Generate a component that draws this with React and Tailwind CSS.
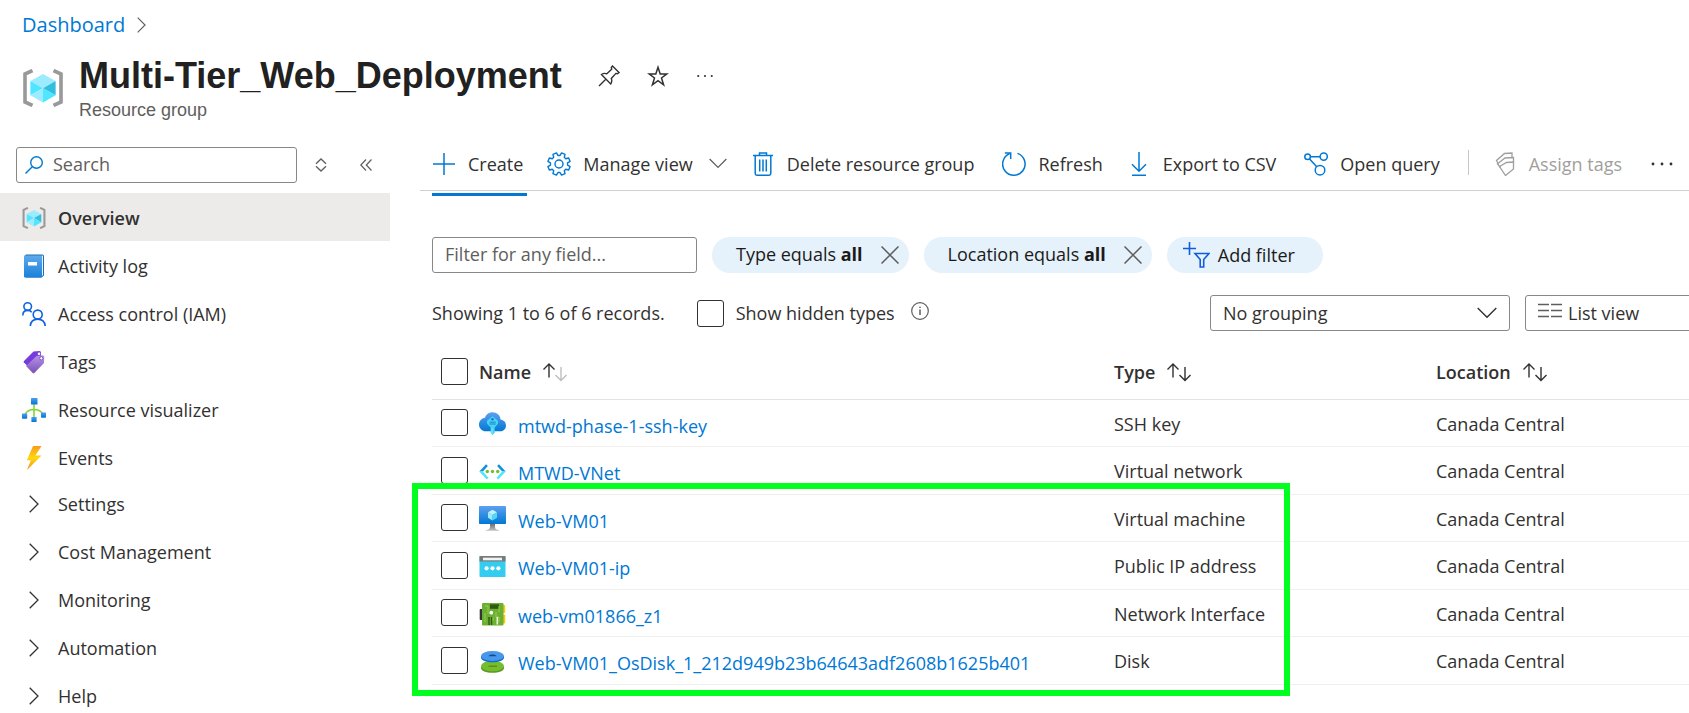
const svgBase = { fill: 'none', xmlns: 'http://www.w3.org/2000/svg', 'aria-hidden': true };

function ResourceGroupIcon({ className }) {
  return (
    <svg {...svgBase} viewBox="0 0 40 38" className={className}>
      <path d="M9.500 1.500 L2 5 V33 L9.500 36.500" stroke="#999" strokeWidth="3.600" />
      <path d="M30.500 1.500 L38 5 V33 L30.500 36.500" stroke="#999" strokeWidth="3.600" />
      <path d="M20 5 L32.600 12 L20 19.200 L7.400 12 Z" fill="#9cebff" />
      <path d="M7.400 12 L20 19.200 L7.400 26.300 Z" fill="#50e6ff" />
      <path d="M32.600 12 V26.300 L20 19.200 Z" fill="#32bedd" />
      <path d="M7.400 26.300 L20 19.200 V33.500 Z" fill="#9cebff" />
      <path d="M32.600 26.300 L20 19.200 V33.500 Z" fill="#50e6ff" />
    </svg>
  );
}

function Chevron({ className, direction = 'right' }) {
  return direction === 'right' ? (
    <svg {...svgBase} viewBox="0 0 10 18" className={className}>
      <path d="M0.700 0.700 L9 9 L0.700 17.300" stroke="currentColor" strokeWidth="1.300" />
    </svg>
  ) : (
    <svg {...svgBase} viewBox="0 0 20 12" className={className}>
      <path d="M0.700 1 L10 10.300 L19.300 1" stroke="currentColor" strokeWidth="1.400" />
    </svg>
  );
}

function ActivityLogIcon() {
  return (
    <svg {...svgBase} viewBox="0 0 24 24" className="size-6">
      <defs>
        <linearGradient id="book" x1="0" y1="0" x2="0" y2="1">
          <stop offset="0" stopColor="#5ea9ee" />
          <stop offset="1" stopColor="#1a80d8" />
        </linearGradient>
      </defs>
      <path d="M4 .5 H20.500 Q22 .5 22 2 V21.500 L19.500 23.500 H4 Q2.500 23 2.500 21.500 V2 Z" fill="#1f6fb0" />
      <path d="M19 2 L21 1.500 V21 L19 23 Z" fill="#e8f3fc" />
      <rect x="2" y="1.500" width="18" height="22" rx="1" fill="url(#book)" />
      <rect x="6" y="8" width="9" height="3.500" fill="#fff" />
    </svg>
  );
}

function AccessIcon() {
  return (
    <svg {...svgBase} viewBox="0 0 24 24" className="size-6" stroke="#0f62e0" strokeWidth="1.600">
      <circle cx="5.700" cy="4.600" r="3.800" />
      <path d="M.8 13.500 C.8 10 3 8.400 5.700 8.400 C7.500 8.400 8.800 9 9.700 10.200" />
      <circle cx="15.700" cy="12.600" r="4.500" />
      <path d="M8.300 24 C8.700 19.300 11.700 17.100 15.700 17.100 C19.700 17.100 22.700 19.300 23.200 24" />
    </svg>
  );
}

function TagsIcon() {
  return (
    <svg {...svgBase} viewBox="0 0 24 24" className="size-6">
      <defs>
        <linearGradient id="tag" x1="0" y1="0" x2="0" y2="1">
          <stop offset="0" stopColor="#b794e6" />
          <stop offset="1" stopColor="#7a51b8" />
        </linearGradient>
      </defs>
      <path d="M11.500 1.500 L17.500 1 Q19 1 19 2.500 V7 L5 15.500 L1.800 12.300 Q1.500 11.600 2 11 Z" fill="#773adc" />
      <circle cx="17" cy="3.800" r="1.300" fill="#fff" />
      <path d="M14.500 6 L20.500 5.300 Q22.200 5.300 22.200 7 L22 13 L12.400 23 Q11.500 23.600 10.700 23 L4 15.900 Z" fill="url(#tag)" />
      <circle cx="19.300" cy="8.300" r="1.600" fill="#fff" stroke="#6b3fb5" strokeWidth=".8" />
    </svg>
  );
}

function VisualizerIcon() {
  return (
    <svg {...svgBase} viewBox="0 0 24 24" className="size-6">
      <defs>
        <linearGradient id="node" x1="0" y1="0" x2="0" y2="1">
          <stop offset="0" stopColor="#4f9cf0" />
          <stop offset="1" stopColor="#0078d4" />
        </linearGradient>
      </defs>
      <path d="M12 6 V20 M3 16.500 C5 12.500 7.500 11.500 12 11.500 C16.500 11.500 19 12.500 21 16.500" stroke="#86d633" strokeWidth="1.600" />
      <rect x="9" y="0" width="6.500" height="6.500" rx=".6" fill="url(#node)" />
      <rect x="0" y="15.500" width="5.200" height="5.200" rx=".6" fill="url(#node)" />
      <rect x="9.400" y="19" width="5.200" height="5" rx=".6" fill="url(#node)" />
      <rect x="19" y="14.500" width="5" height="5.200" rx=".6" fill="url(#node)" />
    </svg>
  );
}

function EventsIcon() {
  return (
    <svg {...svgBase} viewBox="0 0 24 24" className="size-6">
      <defs>
        <linearGradient id="bolt" x1="0" y1="0" x2="0" y2="1">
          <stop offset="0" stopColor="#f99a1c" />
          <stop offset=".5" stopColor="#ffd80f" />
          <stop offset="1" stopColor="#f78d1e" />
        </linearGradient>
      </defs>
      <path d="M11 0 H19.500 L13.500 9.500 H19.500 L5 24 L8.800 14.200 H4.800 Z" fill="url(#bolt)" />
    </svg>
  );
}

function SshKeyIcon() {
  return (
    <svg {...svgBase} viewBox="0 0 27 27" className="size-[27px]">
      <defs>
        <linearGradient id="cloud" x1="0" y1="0" x2="0" y2="1">
          <stop offset="0" stopColor="#5ea0ef" />
          <stop offset="1" stopColor="#0078d4" />
        </linearGradient>
      </defs>
      <path d="M27 15.500 C27 12.200 24.500 10 21.500 9.600 C21.200 5.300 17.800 2.300 13.500 2.300 C10 2.300 7 4.500 6 7.700 C2.500 8.200 0 11 0 14.500 C0 18.300 3 21.300 7 21.300 H21.500 C24.700 21.300 27 18.600 27 15.500 Z" fill="url(#cloud)" />
      <path d="M13.500 6.200 L18.700 10.500 Q19.700 12.300 18.700 14 L15.700 17.500 V22.800 L13.700 25 L11.700 23 V17.500 L8.300 14 Q7.300 12.300 8.300 10.500 Z" fill="#45d4f5" />
      <circle cx="13.500" cy="9.200" r="1.300" fill="#1879cf" />
      <path d="M10.500 12.200 H16.700 M10.500 14 H16.700" stroke="#1879cf" strokeWidth=".9" />
      <path d="M13 18 V24" stroke="#9cebff" strokeWidth=".8" />
    </svg>
  );
}

function VnetIcon() {
  return (
    <svg {...svgBase} viewBox="0 0 27 27" className="size-[27px]">
      <path d="M.3 13.500 L7 6.300 L8.900 8.100 L3.900 13.500 Z M26.700 13.500 L20 6.300 L18.100 8.100 L23.100 13.500 Z" fill="#1490df" />
      <path d="M.3 13.500 L7.800 21.500 L9.500 19.700 L3.900 13.500 Z M26.700 13.500 L19.200 21.500 L17.500 19.700 L23.100 13.500 Z" fill="#50e6ff" />
      <circle cx="8.300" cy="13.500" r="1.700" fill="#76bc2d" />
      <circle cx="13.500" cy="13.500" r="1.700" fill="#76bc2d" />
      <circle cx="18.700" cy="13.500" r="1.700" fill="#76bc2d" />
    </svg>
  );
}

function VmIcon() {
  return (
    <svg {...svgBase} viewBox="0 0 27 27" className="size-[27px]">
      <defs>
        <linearGradient id="screen" x1="0" y1="0" x2="0" y2="1">
          <stop offset="0" stopColor="#5ea0ef" />
          <stop offset="1" stopColor="#0078d4" />
        </linearGradient>
        <linearGradient id="stand" x1="0" y1="0" x2="0" y2="1">
          <stop offset="0" stopColor="#707070" />
          <stop offset="1" stopColor="#c4c4c4" />
        </linearGradient>
      </defs>
      <rect x="0" y="1" width="27" height="18" rx=".8" fill="url(#screen)" />
      <path d="M11 19 H16 V22 C16 24 17.500 24.700 20 25 V25.800 H7 V25 C9.500 24.700 11 24 11 22 Z" fill="url(#stand)" />
      <path d="M13.500 4.700 L18 7.300 L13.500 10 L9 7.300 Z" fill="#c3f1ff" />
      <path d="M9 7.300 L13.500 10 V15.500 L9 12.800 Z" fill="#9cebff" />
      <path d="M18 7.300 L13.500 10 V15.500 L18 12.800 Z" fill="#50d8f5" />
    </svg>
  );
}

function PublicIpIcon() {
  return (
    <svg {...svgBase} viewBox="0 0 27 27" className="size-[27px]">
      <rect x=".5" y="3" width="26" height="21" rx=".8" fill="#32cdf0" />
      <path d="M.5 8 V3.800 Q.5 3 1.300 3 H25.700 Q26.500 3 26.500 3.800 V8.500 H.5 Z" fill="#7a7a7a" />
      <rect x="4" y="4.700" width="19" height="2.600" fill="#f2f2f2" />
      <circle cx="7.600" cy="15.300" r="2.100" fill="#fff" />
      <circle cx="13.500" cy="15.300" r="2.100" fill="#fff" />
      <circle cx="19.400" cy="15.300" r="2.100" fill="#fff" />
    </svg>
  );
}

function NicIcon() {
  return (
    <svg {...svgBase} viewBox="0 0 27 27" className="size-[27px]">
      <rect x=".7" y="9" width="3" height="11" rx=".8" fill="#333" />
      <rect x="22" y="5" width="4.200" height="8" rx=".8" fill="#ffca00" />
      <rect x="22" y="14.500" width="4.200" height="9" rx=".8" fill="#ffca00" />
      <rect x="3" y="3" width="21.500" height="22.500" rx="1" fill="#6cb033" />
      <rect x="11" y="4.300" width="9" height="4.500" fill="#2f5a12" />
      <path d="M6 6 H9 V14 M6 13 V22 M14 21 V17 M17 12 V17 H20 V22 M20 6 V12" stroke="#93cf4e" strokeWidth="1" />
      <circle cx="12.300" cy="12.700" r="1.900" fill="#fff" />
      <path d="M10 17 V25 M12.500 17 V25" stroke="#2f5a12" strokeWidth="1.400" />
      <path d="M18.300 17 V24.500" stroke="#e8f6d8" strokeWidth="1.600" />
    </svg>
  );
}

function DiskIcon() {
  return (
    <svg {...svgBase} viewBox="0 0 27 27" className="size-[27px]">
      <path d="M2 18.500 V20 C2 22.800 7 24.800 13.500 24.800 C20 24.800 25 22.800 25 20 V18.500 Z" fill="#5a9a22" />
      <ellipse cx="13.500" cy="18" rx="11.500" ry="5.300" fill="#76bc2d" />
      <path d="M9.500 18.200 H18" stroke="#4f8a1a" strokeWidth="1.200" />
      <path d="M2 8 V9.500 C2 12.300 7 14.300 13.500 14.300 C20 14.300 25 12.300 25 9.500 V8 Z" fill="#0f6fc4" />
      <ellipse cx="13.500" cy="8" rx="11.500" ry="5" fill="#4a98ec" />
      <path d="M9.500 8.300 C10 6 17 6 17.500 8.300 Z" fill="#0a4f90" />
    </svg>
  );
}

function PlusIcon() {
  return (
    <svg {...svgBase} viewBox="0 0 24 24" className="size-6">
      <path d="M12 1 V23 M1 12 H23" stroke="#0078d4" strokeWidth="1.500" />
    </svg>
  );
}

function GearIcon() {
  const teeth = [0, 45, 90, 135, 180, 225, 270, 315];
  const point = (r, deg) => {
    const a = (deg * Math.PI) / 180;
    return `${(12 + r * Math.sin(a)).toFixed(2)} ${(12 - r * Math.cos(a)).toFixed(2)}`;
  };
  const d = teeth
    .map((t, i) => `${i ? 'L' : 'M'}${point(8.600, t - 7)} L${point(8.600, t + 7)} L${point(11.400, t + 13)} L${point(11.400, t + 32)} `)
    .join('');
  return (
    <svg {...svgBase} viewBox="0 0 24 24" className="size-6" stroke="#0078d4" strokeWidth="1.400" strokeLinejoin="round">
      <path d={`${d}Z`} />
      <circle cx="12" cy="12" r="4" />
    </svg>
  );
}

function TrashIcon() {
  return (
    <svg {...svgBase} viewBox="0 0 24 24" className="size-6" stroke="#0078d4" strokeWidth="1.500">
      <path d="M2 3.500 H22 M8.500 3.500 V1 H15.500 V3.500 M4.200 3.500 V21.500 Q4.200 23.200 5.900 23.200 H18.100 Q19.800 23.200 19.800 21.500 V3.500 M8.700 7.500 V19.500 M12 7.500 V19.500 M15.300 7.500 V19.500" />
    </svg>
  );
}

function RefreshIcon() {
  return (
    <svg {...svgBase} viewBox="0 0 24 24" className="size-6" stroke="#0078d4" strokeWidth="1.500">
      <path d="M15.500 1.400 A11.200 11.200 0 1 1 7.700 1.600" />
      <path d="M2.800 1 H8.700 V7" />
    </svg>
  );
}

function DownloadIcon() {
  return (
    <svg {...svgBase} viewBox="0 0 24 24" className="size-6" stroke="#0078d4" strokeWidth="1.500">
      <path d="M12 0 V19 M5 12.300 L12 19.300 L19 12.300 M5 23.200 H19" />
    </svg>
  );
}

function QueryIcon() {
  return (
    <svg {...svgBase} viewBox="0 0 24 24" className="size-6" stroke="#0078d4" strokeWidth="1.500">
      <circle cx="3.600" cy="4.800" r="2.800" />
      <circle cx="19.700" cy="4.600" r="3.600" />
      <circle cx="16" cy="18.200" r="4.800" />
      <path d="M6.400 4.800 H16 M5.600 6.900 L12.500 14.500" />
    </svg>
  );
}

function AssignTagsIcon() {
  return (
    <svg {...svgBase} viewBox="0 0 24 24" className="size-6" stroke="#a19f9d" strokeWidth="1.300">
      <path d="M6.500 14.500 L13.500 10.500 L20.500 10 V17 L12.500 23.500 Z" />
      <path d="M7.500 15.500 L4.500 11.800 L12 6 L20.500 5.500 V10" />
      <path d="M5.500 12.500 L3.500 8.500 L11.500 1.500 L19 1 V5.500" />
    </svg>
  );
}

function DotsIcon({ className }) {
  return (
    <svg {...svgBase} viewBox="0 0 24 24" className={className} fill="currentColor">
      <circle cx="3" cy="12" r="1.400" />
      <circle cx="12" cy="12" r="1.400" />
      <circle cx="21" cy="12" r="1.400" />
    </svg>
  );
}

function CloseIcon() {
  return (
    <svg {...svgBase} viewBox="0 0 18 18" className="size-[18px]">
      <path d="M.5 .5 L17.500 17.500 M17.500 .5 L.5 17.500" stroke="#605e5c" strokeWidth="1.500" />
    </svg>
  );
}

function SortArrows({ active }) {
  return (
    <svg {...svgBase} viewBox="0 0 24 20" className="h-5 w-6" strokeWidth="1.400">
      <path d="M6 15.500 V2 M.5 7.500 L6 2 L11.500 7.500" stroke="#323130" />
      <path d="M18 5 V18.500 M12.500 13 L18 18.500 L23.500 13" stroke={active ? '#c0bebc' : '#323130'} />
    </svg>
  );
}

const navItems = [
  { label: 'Overview', icon: <ResourceGroupIcon className="h-[22px] w-6" />, current: true },
  { label: 'Activity log', icon: <ActivityLogIcon /> },
  { label: 'Access control (IAM)', icon: <AccessIcon /> },
  { label: 'Tags', icon: <TagsIcon /> },
  { label: 'Resource visualizer', icon: <VisualizerIcon /> },
  { label: 'Events', icon: <EventsIcon /> },
];

const navGroups = ['Settings', 'Cost Management', 'Monitoring', 'Automation', 'Help'];

const resources = [
  { name: 'mtwd-phase-1-ssh-key', type: 'SSH key', icon: <SshKeyIcon /> },
  { name: 'MTWD-VNet', type: 'Virtual network', icon: <VnetIcon /> },
  { name: 'Web-VM01', type: 'Virtual machine', icon: <VmIcon /> },
  { name: 'Web-VM01-ip', type: 'Public IP address', icon: <PublicIpIcon /> },
  { name: 'web-vm01866_z1', type: 'Network Interface', icon: <NicIcon /> },
  { name: 'Web-VM01_OsDisk_1_212d949b23b64643adf2608b1625b401', type: 'Disk', icon: <DiskIcon /> },
];

const checkboxClass =
  'block size-[27px] shrink-0 appearance-none rounded-[3px] border border-[#323130] bg-white checked:bg-[#0078d4]';

function ToolButton({ icon, children, className = '' }) {
  return (
    <button type="button" className={`flex h-full shrink-0 items-center gap-3 pb-[10px] whitespace-nowrap ${className}`}>
      {icon}
      {children}
    </button>
  );
}

function FilterPill({ field }) {
  return (
    <div className="flex h-9 shrink-0 items-center gap-[18px] rounded-full bg-[#e5f1fb] pr-[10px] pl-6 text-[#1b1a19]">
      <button type="button" className="pb-0.5 whitespace-nowrap">
        {field} equals <b>all</b>
      </button>
      <button type="button" aria-label={`Remove ${field} filter`}>
        <CloseIcon />
      </button>
    </div>
  );
}

function Header() {
  return (
    <header className="h-[147px]">
      <nav aria-label="Breadcrumb" className="flex h-[50px] items-center gap-3 pl-[22px] text-[20px]">
        <a href="#dashboard" className="text-[#0078d4]">Dashboard</a>
        <Chevron className="h-4 w-[9px] text-[#605e5c]" />
      </nav>
      <div className="flex pl-[23px]">
        <ResourceGroupIcon className="mt-[19px] h-[38px] w-10 shrink-0" />
        <div className="pl-4 font-['Liberation_Sans',Arial,sans-serif]">
          <div className="flex h-[50px] items-center pt-0.5">
            <h1 className="text-[36px] font-bold text-[#212121]">Multi-Tier_Web_Deployment</h1>
            <div className="flex items-center gap-[27px] pl-9 text-[#323130]">
              <button type="button" aria-label="Pin">
                <svg {...svgBase} viewBox="0 0 22 22" className="size-[22px]" stroke="currentColor" strokeWidth="1.400">
                  <path d="M14.500 1 L21 7.500 L19.300 8.700 L17.900 8.400 L13.300 13.500 Q14.500 16.500 12.700 19 L3.500 9.500 Q6 7.600 8.800 8.800 L13.700 4.200 L13.300 2.500 Z M8 14 L1 21" />
                </svg>
              </button>
              <button type="button" aria-label="Favorite">
                <svg {...svgBase} viewBox="0 0 22 22" className="size-[22px]" stroke="currentColor" strokeWidth="1.500">
                  <path d="M11 2.300 L13.200 8.900 H20 L14.500 13 L16.600 19.800 L11 15.600 L5.400 19.800 L7.500 13 L2 8.900 H8.800 Z" />
                </svg>
              </button>
              <button type="button" aria-label="More">
                <DotsIcon className="size-[18px]" />
              </button>
            </div>
          </div>
          <p className="text-lg leading-5 text-[#605e5c]">Resource group</p>
        </div>
      </div>
    </header>
  );
}

function Sidebar() {
  return (
    <aside className="w-[390px] shrink-0">
      <div className="flex h-[46px] items-start pl-4">
        <label className="flex h-9 w-[281px] items-center gap-[10px] rounded-[3px] border border-[#8a8886] px-2">
          <svg {...svgBase} viewBox="0 0 18 18" className="size-[18px] shrink-0" stroke="#0078d4" strokeWidth="1.400">
            <circle cx="11.500" cy="6.500" r="5.800" />
            <path d="M7.300 10.700 L.5 17.500" />
          </svg>
          <input type="search" aria-label="Search" placeholder="Search" className="w-full min-w-0 pb-0.5 outline-none placeholder:text-[#605e5c]" />
        </label>
        <div className="flex h-9 items-center gap-[33px] pl-[18px] text-[#605e5c]">
          <button type="button" aria-label="Expand or collapse all">
            <svg {...svgBase} viewBox="0 0 12 14" className="h-[14px] w-3" stroke="currentColor" strokeWidth="1.300">
              <path d="M1 5.800 L6 1 L11 5.800 M1 8.200 L6 13 L11 8.200" />
            </svg>
          </button>
          <button type="button" aria-label="Hide menu">
            <svg {...svgBase} viewBox="0 0 12 12" className="size-3" stroke="currentColor" strokeWidth="1.200">
              <path d="M6 .5 L.8 6 L6 11.500 M11.500 .5 L6.300 6 L11.500 11.500" />
            </svg>
          </button>
        </div>
      </div>
      <nav aria-label="Resource menu">
        <ul>
          {navItems.map((item) => (
            <li key={item.label}>
              <a
                href={`#${item.label}`}
                className={`flex h-12 items-center gap-3 pt-0.5 pl-[22px] ${item.current ? 'bg-[#edebe9] font-semibold' : ''}`}
              >
                {item.icon}
                {item.label}
              </a>
            </li>
          ))}
          {navGroups.map((label) => (
            <li key={label}>
              <button type="button" className="flex h-12 w-full items-center gap-[19px] pb-0.5 pl-[29px]">
                <Chevron className="h-[18px] w-[10px]" />
                {label}
              </button>
            </li>
          ))}
        </ul>
      </nav>
    </aside>
  );
}

function CommandBar() {
  return (
    <div className="flex h-[44px] border-b border-[#d2d0ce] pl-3">
      <ToolButton icon={<PlusIcon />} className="relative pr-1">
        Create
        <span className="absolute inset-x-0 -bottom-[6px] h-[3px] bg-[#0078d4]" />
      </ToolButton>
      <ToolButton icon={<GearIcon />} className="ml-5">
        Manage view
        <Chevron direction="down" className="ml-1 h-[11px] w-[18px] text-[#605e5c]" />
      </ToolButton>
      <ToolButton icon={<TrashIcon />} className="ml-6">Delete resource group</ToolButton>
      <ToolButton icon={<RefreshIcon />} className="ml-7">Refresh</ToolButton>
      <ToolButton icon={<DownloadIcon />} className="ml-6">Export to CSV</ToolButton>
      <ToolButton icon={<QueryIcon />} className="ml-7">Open query</ToolButton>
      <div className="mt-[3px] ml-7 h-[25px] w-px shrink-0 bg-[#c8c6c4]" />
      <ToolButton icon={<AssignTagsIcon />} className="ml-6 text-[#a19f9d]">Assign tags</ToolButton>
      <button type="button" aria-label="More commands" className="ml-7 shrink-0 pb-[10px]">
        <DotsIcon className="size-6" />
      </button>
    </div>
  );
}

function Filters() {
  return (
    <div className="flex items-center gap-[15px] pt-[46px]">
      <input
        type="text"
        aria-label="Filter for any field"
        placeholder="Filter for any field..."
        className="h-9 w-[265px] rounded-[3px] border border-[#8a8886] px-3 pb-0.5 outline-none placeholder:text-[#605e5c]"
      />
      <FilterPill field="Type" />
      <FilterPill field="Location" />
      <button type="button" className="flex h-9 items-center gap-2 rounded-full bg-[#e5f1fb] pr-7 pl-4 whitespace-nowrap text-[#1b1a19]">
        <svg {...svgBase} viewBox="0 0 27 27" className="size-[27px]" stroke="#0f5ce0" strokeWidth="1.600">
          <path d="M6.500 0 V13 M0 6.500 H13" />
          <path d="M12 11.500 H26 L20.700 17.500 V25 H17.200 V17.500 Z" />
        </svg>
        Add filter
      </button>
    </div>
  );
}

function ListOptions() {
  return (
    <div className="-mr-[60px] flex items-center pt-[22px]">
      <p className="shrink-0">Showing 1 to 6 of 6 records.</p>
      <label className="ml-8 flex shrink-0 items-center gap-3">
        <input type="checkbox" className={checkboxClass} />
        Show hidden types
      </label>
      <button type="button" aria-label="About hidden types" className="ml-4 pb-1">
        <svg {...svgBase} viewBox="0 0 18 18" className="size-[18px]" stroke="#605e5c" strokeWidth="1.200">
          <circle cx="9" cy="9" r="8.300" />
          <path d="M9 7.500 V13 M9 4.800 V6" strokeWidth="1.500" />
        </svg>
      </button>
      <div className="ml-auto flex gap-[15px]">
        <div className="grid h-9 w-[300px] items-center rounded-[3px] border border-[#8a8886]">
          <select aria-label="Grouping" className="col-start-1 row-start-1 h-full w-full appearance-none pl-3 outline-none">
            <option>No grouping</option>
          </select>
          <Chevron direction="down" className="pointer-events-none col-start-1 row-start-1 mr-3 h-3 w-5 justify-self-end" />
        </div>
        <div className="flex h-9 w-[224px] items-center gap-[6px] rounded-[3px] border border-[#8a8886] pl-3">
          <svg {...svgBase} viewBox="0 0 24 16" className="mb-1 h-4 w-6" stroke="#605e5c" strokeWidth="1.700">
            <path d="M0 1.500 H11 M13 1.500 H24 M0 7.500 H11 M13 7.500 H24 M0 13.500 H11 M13 13.500 H24" />
          </svg>
          <select aria-label="View" className="h-full grow appearance-none outline-none">
            <option>List view</option>
          </select>
        </div>
      </div>
    </div>
  );
}

function HeaderCell({ children, active }) {
  return (
    <th scope="col" className="p-0 text-left font-semibold">
      <button type="button" className="flex items-center gap-3">
        {children}
        <SortArrows active={active} />
      </button>
    </th>
  );
}

function ResourceTable() {
  return (
    <div className="relative pt-[14px]">
      <table className="w-full table-fixed border-collapse whitespace-nowrap">
        <colgroup>
          <col className="w-[47px]" />
          <col className="w-[635px]" />
          <col className="w-[322px]" />
          <col />
        </colgroup>
        <thead>
          <tr className="h-[54px] border-b border-[#e5e3e1]">
            <th scope="col" className="p-0 pl-[9px]">
              <input type="checkbox" aria-label="Select all" className={checkboxClass} />
            </th>
            <HeaderCell active>Name</HeaderCell>
            <HeaderCell>Type</HeaderCell>
            <HeaderCell>Location</HeaderCell>
          </tr>
        </thead>
        <tbody>
          {resources.map((r) => (
            <tr key={r.name} className="h-[47px] border-b border-[#f0efee] even:h-12">
              <td className="p-0 pl-[9px]">
                <input type="checkbox" aria-label={`Select ${r.name}`} className={checkboxClass} />
              </td>
              <td className="p-0 pt-0.5">
                <div className="flex items-center gap-3">
                  {r.icon}
                  <a href={`#${r.name}`} className="pt-1 text-[#0078d4]">{r.name}</a>
                </div>
              </td>
              <td className="p-0 pt-0.5">{r.type}</td>
              <td className="p-0 pt-0.5">Canada Central</td>
            </tr>
          ))}
        </tbody>
      </table>
      <div className="pointer-events-none absolute top-[152px] -left-5 h-[213px] w-[878px] border-[6px] border-[#00ff1e]" />
    </div>
  );
}

export default function App() {
  return (
    <div className="h-screen overflow-hidden bg-white font-['Open_Sans','Noto_Sans',sans-serif] text-[18px] leading-6 text-[#323130]">
      <Header />
      <div className="flex">
        <Sidebar />
        <main className="ml-[30px] min-w-0 grow">
          <CommandBar />
          <div className="pl-3">
            <Filters />
            <ListOptions />
            <ResourceTable />
          </div>
        </main>
      </div>
    </div>
  );
}
